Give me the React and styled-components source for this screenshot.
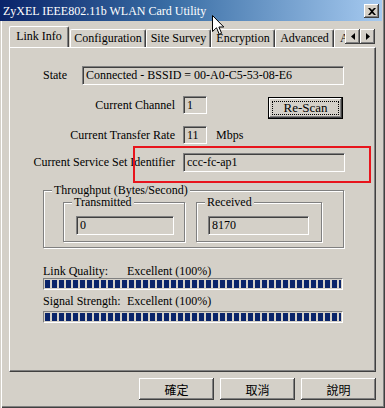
import React from 'react';
import styled, { createGlobalStyle } from 'styled-components';

const Global = createGlobalStyle`
  html, body { margin: 0; padding: 0; background: #d4d0c8; }
  body {
    font-family: "Liberation Serif", "Noto Sans CJK TC", serif;
    font-size: 12px;
    color: #000;
  }
  * { box-sizing: border-box; }
`;

const Window = styled.div`
  position: relative;
  width: 385px;
  height: 408px;
  background: #d4d0c8;
  overflow: hidden;
  display: flex;
  flex-direction: column;
  box-shadow: inset 1px 0 0 #d4d0c8, inset 2px 0 0 #fff,
    inset -1px -1px 0 #404040, inset -2px -2px 0 #808080;
`;

const TitleBar = styled.div`
  height: 21px;
  margin-right: 3px;
  background: linear-gradient(to right, #0a246a 0%, #3a6ea5 45%, #a6caf0 100%);
  display: flex;
  align-items: center;
  justify-content: space-between;
  padding: 1px 3px 0 3px;
  color: #fff;
  font-size: 12px;
  white-space: nowrap;
`;

const CloseBtn = styled.div`
  width: 15px;
  height: 14px;
  background: #d4d0c8;
  display: flex;
  align-items: center;
  justify-content: center;
  box-shadow: inset -1px -1px 0 #404040, inset 1px 1px 0 #fff,
    inset -2px -2px 0 #808080;
`;

const Body = styled.div`
  flex: 1;
  padding: 0 9px 0 9px;
  display: flex;
  flex-direction: column;
`;

const TabStrip = styled.div`
  height: 26px;
  display: flex;
  align-items: flex-end;
  position: relative;
  z-index: 1;
`;

const TabsClip = styled.div`
  width: 336px;
  height: 100%;
  overflow: hidden;
  display: flex;
  align-items: flex-end;
`;

const Tab = styled.div`
  flex: none;
  width: ${p => p.$w}px;
  height: ${p => (p.$active ? 22 : 18)}px;
  margin-right: ${p => (p.$active ? 1 : 0)}px;
  margin-bottom: ${p => (p.$active ? -1 : 0)}px;
  background: #d4d0c8;
  border-top: 1px solid #fff;
  border-left: 1px solid #fff;
  border-right: 1px solid #404040;
  border-radius: 2px 2px 0 0;
  box-shadow: inset -1px 0 0 #808080;
  display: flex;
  align-items: center;
  justify-content: ${p => (p.$clip ? 'flex-start' : 'center')};
  padding: ${p => (p.$active ? '0 0 3px 0' : p.$clip ? '0 0 0 5px' : '0')};
  white-space: nowrap;
  font-size: 12px;
`;

const Arrows = styled.div`
  align-self: flex-start;
  margin-top: 8px;
  display: flex;
`;

const ArrowBtn = styled.div`
  width: 15px;
  height: 15px;
  background: #d4d0c8;
  display: flex;
  align-items: center;
  justify-content: center;
  box-shadow: inset -1px -1px 0 #404040, inset 1px 1px 0 #fff,
    inset -2px -2px 0 #808080;
`;

const Panel = styled.div`
  position: relative;
  width: 367px;
  height: 325px;
  border-top: 1px solid #fff;
  border-left: 1px solid #fff;
  border-right: 1px solid #404040;
  border-bottom: 1px solid #404040;
  box-shadow: inset -1px -1px 0 #808080;
  display: flex;
  flex-direction: column;
`;

const Row = styled.div`
  display: flex;
  align-items: flex-start;
  margin-top: ${p => p.$top}px;
  padding-left: ${p => p.$indent || 0}px;
`;

const Label = styled.div`
  flex: none;
  width: ${p => p.$w}px;
  text-align: ${p => p.$align || 'left'};
  line-height: ${p => p.$lh || 18}px;
  margin-left: ${p => p.$ml || 0}px;
  white-space: nowrap;
`;

const Field = styled.div`
  flex: none;
  width: ${p => p.$w}px;
  height: ${p => p.$h || 18}px;
  margin-left: ${p => p.$ml || 0}px;
  margin-top: ${p => p.$mt || 0}px;
  border-top: 1px solid #808080;
  border-left: 1px solid #808080;
  border-right: 1px solid #fff;
  border-bottom: 1px solid #fff;
  box-shadow: inset 1px 1px 0 #404040, inset -1px -1px 0 #d4d0c8;
  padding-left: 3px;
  line-height: ${p => (p.$h || 18) - 2}px;
  white-space: nowrap;
  overflow: hidden;
`;

const PushButton = styled.button`
  flex: none;
  width: 75px;
  height: 22px;
  margin-left: ${p => p.$ml || 0}px;
  margin-top: ${p => p.$mt || 0}px;
  padding: 0;
  border: none;
  background: #d4d0c8;
  color: #000;
  font-family: ${p => (p.$latin ? '"Liberation Serif", serif' : '"Noto Sans CJK TC", sans-serif')};
  font-size: ${p => (p.$latin ? 13 : 12)}px;
  display: flex;
  align-items: center;
  justify-content: center;
  box-shadow: ${p =>
    p.$focus
      ? 'inset 0 0 0 1px #000, inset -2px -2px 0 #404040, inset 2px 2px 0 #fff, inset -3px -3px 0 #808080'
      : 'inset -1px -1px 0 #404040, inset 1px 1px 0 #fff, inset -2px -2px 0 #808080'};
`;

const FocusRing = styled.span`
  width: 67px;
  height: 14px;
  border: 1px dotted #000;
  display: flex;
  align-items: center;
  justify-content: center;
  line-height: 12px;
`;

const Group = styled.div`
  position: relative;
  flex: none;
  width: ${p => p.$w}px;
  height: ${p => p.$h}px;
  margin-left: ${p => p.$ml || 0}px;
  margin-top: ${p => p.$mt || 0}px;
  border: 1px solid #808080;
  box-shadow: inset 1px 1px 0 #fff, 1px 1px 0 #fff;
  display: flex;
  flex-direction: ${p => p.$dir || 'row'};
  align-items: flex-start;
`;

const Legend = styled.div`
  position: absolute;
  top: -6px;
  left: ${p => p.$left || 8}px;
  height: 11px;
  padding: 0 2px;
  background: #d4d0c8;
  line-height: 11px;
  white-space: nowrap;
`;

const Bar = styled.div`
  width: 300px;
  height: 12px;
  margin-left: 33px;
  margin-top: ${p => p.$top}px;
  border-top: 1px solid #808080;
  border-left: 1px solid #808080;
  border-right: 1px solid #fff;
  border-bottom: 1px solid #fff;
  padding: 1px;
`;

const Chunks = styled.div`
  height: 100%;
  background: repeating-linear-gradient(
    to right,
    #0a246a 0px,
    #0a246a 5px,
    transparent 5px,
    transparent 7px
  );
`;

const ButtonRow = styled.div`
  display: flex;
  justify-content: flex-end;
  gap: 6px;
  margin-top: 6px;
`;

const Annotation = styled.div`
  position: absolute;
  left: 123px;
  top: 98px;
  width: 238px;
  height: 37px;
  border: 2px solid #e8141c;
  pointer-events: none;
`;

const Cursor = styled.svg`
  position: absolute;
  left: 212px;
  top: 15px;
  z-index: 5;
`;

const tabs = [
  { t: 'Configuration', w: 76 },
  { t: 'Site Survey', w: 65 },
  { t: 'Encryption', w: 64 },
  { t: 'Advanced', w: 59 },
];

export default function App() {
  return (
    <>
      <Global />
      <Window>
        <TitleBar>
          <span>ZyXEL IEEE802.11b WLAN Card Utility</span>
          <CloseBtn>
            <svg width="8" height="7" viewBox="0 0 8 7">
              <path d="M0 0h2l2 2 2-2h2L5 3.5 8 7H6L4 5 2 7H0l3-3.5z" fill="#000" />
            </svg>
          </CloseBtn>
        </TitleBar>
        <Body>
          <TabStrip>
            <TabsClip>
              <Tab $w={60} $active>Link Info</Tab>
              {tabs.map(x => (
                <Tab key={x.t} $w={x.w}>{x.t}</Tab>
              ))}
              <Tab $w={60} $clip>About</Tab>
            </TabsClip>
            <Arrows>
              <ArrowBtn>
                <svg width="4" height="7" viewBox="0 0 4 7"><path d="M4 0v7L0 3.5z" fill="#000" /></svg>
              </ArrowBtn>
              <ArrowBtn>
                <svg width="4" height="7" viewBox="0 0 4 7"><path d="M0 0v7l4-3.5z" fill="#000" /></svg>
              </ArrowBtn>
            </Arrows>
          </TabStrip>
          <Panel>
            <Row $top={18} $indent={33}>
              <Label $w={39} $lh={19}>State</Label>
              <Field $w={262} $h={19}>Connected - BSSID = 00-A0-C5-53-08-E6</Field>
            </Row>
            <Row $top={11}>
              <Label $w={165} $align="right">Current Channel</Label>
              <Field $w={24} $ml={8}>1</Field>
              <PushButton $ml={61} $mt={1} $latin $focus>
                <FocusRing>Re-Scan</FocusRing>
              </PushButton>
            </Row>
            <Row $top={7}>
              <Label $w={165} $align="right">Current Transfer Rate</Label>
              <Field $w={24} $ml={8}>11</Field>
              <Label $w={40} $ml={9}>Mbps</Label>
            </Row>
            <Row $top={9}>
              <Label $w={165} $align="right" $lh={19}>Current Service Set Identifier</Label>
              <Field $w={162} $h={19} $ml={8}>ccc-fc-ap1</Field>
            </Row>
            <Row $top={18} $indent={33}>
              <Group $w={301} $h={58}>
                <Legend $left={8}>Throughput (Bytes/Second)</Legend>
                <Group $w={122} $h={40} $ml={19} $mt={11} $dir="column">
                  <Legend $left={8}>Transmitted</Legend>
                  <Field $w={98} $h={19} $ml={12} $mt={13}>0</Field>
                </Group>
                <Group $w={126} $h={40} $ml={11} $mt={11} $dir="column">
                  <Legend $left={8}>Received</Legend>
                  <Field $w={101} $h={19} $ml={11} $mt={13}>8170</Field>
                </Group>
              </Group>
            </Row>
            <Row $top={16} $indent={33}>
              <Label $w={84} $lh={14}>Link Quality:</Label>
              <Label $w={120} $lh={14}>Excellent (100%)</Label>
            </Row>
            <Bar $top={0}><Chunks /></Bar>
            <Row $top={4} $indent={33}>
              <Label $w={84} $lh={14}>Signal Strength:</Label>
              <Label $w={120} $lh={14}>Excellent (100%)</Label>
            </Row>
            <Bar $top={3}><Chunks /></Bar>
            <Annotation />
          </Panel>
          <ButtonRow>
            <PushButton>確定</PushButton>
            <PushButton>取消</PushButton>
            <PushButton>說明</PushButton>
          </ButtonRow>
        </Body>
        <Cursor width="13" height="21" viewBox="0 0 13 21">
          <path d="M0.5 0.5 L0.5 16.5 L4.5 12.8 L7.3 19.3 L9.6 18.3 L6.9 12 L11.8 12 Z" fill="#fff" stroke="#000" strokeWidth="1" />
        </Cursor>
      </Window>
    </>
  );
}
